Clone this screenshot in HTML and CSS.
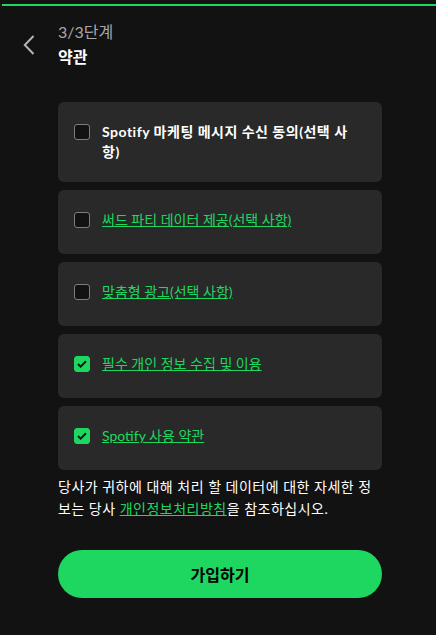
FILE: index.html
```html
<!DOCTYPE html>
<html lang="ko">
<head>
<meta charset="utf-8">
<link rel="stylesheet" href="styles.css">
</head>
<body>
<div class="progress"></div>
<header class="header">
  <button class="back" aria-label="뒤로">
    <svg width="12" height="20" viewBox="0 0 12 20"><path d="M10.5 1 1.8 10l8.7 9" fill="none" stroke="#b3b3b3" stroke-width="2"/></svg>
  </button>
  <div class="titles">
    <div class="step">3/3단계</div>
    <div class="title">약관</div>
  </div>
</header>
<main class="content">
  <div class="cards">
    <label class="card">
      <span class="box"></span>
      <span class="label bold">Spotify 마케팅 메시지 수신 동의(선택 사항)</span>
    </label>
    <label class="card">
      <span class="box"></span>
      <a class="label link">써드 파티 데이터 제공(선택 사항)</a>
    </label>
    <label class="card">
      <span class="box"></span>
      <a class="label link">맞춤형 광고(선택 사항)</a>
    </label>
    <label class="card">
      <span class="box checked"><svg width="10" height="8" viewBox="0 0 10 8"><path d="M1 4l2.6 2.6L9 1.2" fill="none" stroke="#121212" stroke-width="2"/></svg></span>
      <a class="label link">필수 개인 정보 수집 및 이용</a>
    </label>
    <label class="card">
      <span class="box checked"><svg width="10" height="8" viewBox="0 0 10 8"><path d="M1 4l2.6 2.6L9 1.2" fill="none" stroke="#121212" stroke-width="2"/></svg></span>
      <a class="label link">Spotify 사용 약관</a>
    </label>
  </div>
  <p class="note">당사가 귀하에 대해 처리 할 데이터에 대한 자세한 정보는 당사 <a class="link">개인정보처리방침</a>을 참조하십시오.</p>
  <button class="submit">가입하기</button>
</main>
</body>
</html>
```
FILE: styles.css
```css
* { box-sizing: border-box; }
html, body {
  margin: 0;
  padding: 0;
  background: #121212;
  color: #ffffff;
  font-family: "Lato", "Noto Sans CJK KR", sans-serif;
}
body { width: 436px; height: 635px; overflow: hidden; }
.progress {
  height: 2px;
  margin: 4px 0 0 2px;
  background: #1ed760;
}
.header {
  display: flex;
  align-items: center;
  padding-top: 15px;
}
.back {
  width: 58px;
  padding: 0 0 0 23px;
  background: none;
  border: 0;
  display: flex;
  align-items: center;
  height: 20px;
}
.titles { display: flex; flex-direction: column; }
.step {
  font-size: 16px;
  line-height: 22px;
  color: #a7a7a7;
}
.title {
  font-size: 16px;
  line-height: 22px;
  font-weight: 700;
  color: #ffffff;
  margin-top: 3px;
}
.content {
  width: 324px;
  margin: 34px 0 0 58px;
}
.cards { display: flex; flex-direction: column; gap: 8px; }
.card {
  display: flex;
  align-items: flex-start;
  gap: 12px;
  min-height: 64px;
  padding: 20px 24px 20px 16px;
  background: #292929;
  border-radius: 6px;
}
.box {
  flex: none;
  width: 16px;
  height: 16px;
  margin-top: 2px;
  border: 1px solid #7c7c7c;
  border-radius: 3px;
  background: #121212;
  display: flex;
  align-items: center;
  justify-content: center;
}
.box.checked { background: #1ed760; border-color: #1ed760; }
.label {
  font-size: 14px;
  line-height: 20px;
}
.bold { font-weight: 700; color: #ffffff; letter-spacing: 0.5px; }
.link { color: #1ed760; text-decoration: underline; }
.note {
  margin: 6px 0 0;
  font-size: 14px;
  line-height: 22px;
  letter-spacing: 0.5px;
  color: #ffffff;
}
.submit {
  display: block;
  width: 324px;
  height: 48px;
  margin-top: 30px;
  border: 0;
  border-radius: 24px;
  background: #1ed760;
  color: #000000;
  font-family: "Lato", "Noto Sans CJK KR", sans-serif;
  font-size: 16px;
  font-weight: 700;
}
```
